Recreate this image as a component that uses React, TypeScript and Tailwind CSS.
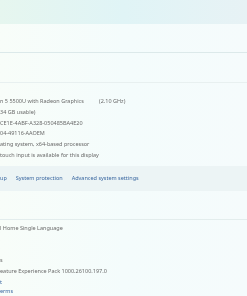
const specRows = [
  { text: "n 5 5500U with Radeon Graphics", extra: "(2.10 GHz)" },
  { text: "34 GB usable)" },
  { text: "CE1E-4ABF-A328-050485BA4E20" },
  { text: "04-49116-AAOEM" },
  { text: "ating system, x64-based processor" },
  { text: "touch input is available for this display" },
]

const App = () => {
  return (
    <div className="w-[247px] h-[296px] overflow-hidden bg-gradient-to-r from-[#f8fdf9] via-[#f4fcfc] to-[#f5fbfc] font-['Noto_Sans',sans-serif] text-[5.5px] text-[#6a6a6a]">
      <div className="h-[24px] bg-gradient-to-r from-[#e6f6ef] via-[#e0f4f6] to-[#e7f2f5]" />
      <div className="h-[29px] border-b border-[#dce9ea]" />
      <div className="h-[30px] border-b border-[#e8f0f0]" />

      <div className="h-[83px] pt-[13px] leading-[10.8px] blur-[0.25px]">
        {specRows.map((row) => (
          <div key={row.text} className="flex whitespace-nowrap">
            <span className="w-[99px]">{row.text}</span>
            {row.extra && <span>{row.extra}</span>}
          </div>
        ))}
      </div>

      <div className="h-[25px] bg-[#ecf4f5] flex items-center gap-[9px] text-[#3a67a0] whitespace-nowrap">
        <span className="blur-[0.25px]">up</span>
        <span className="blur-[0.25px]">System protection</span>
        <span className="blur-[0.25px]">Advanced system settings</span>
      </div>

      <div className="h-[29px] border-b border-[#e3eded]" />

      <div className="pt-[3px] leading-[10.8px] whitespace-nowrap blur-[0.25px]">
        <div>l Home Single Language</div>
        <div className="h-[10.8px]" />
        <div className="h-[10.8px]" />
        <div>s</div>
        <div>eature Experience Pack 1000.26100.197.0</div>
        <div className="text-[#3a67a0] leading-[9.5px] pt-[1px]">
          <div>t</div>
          <div>erms</div>
        </div>
      </div>
    </div>
  )
}

export default App
